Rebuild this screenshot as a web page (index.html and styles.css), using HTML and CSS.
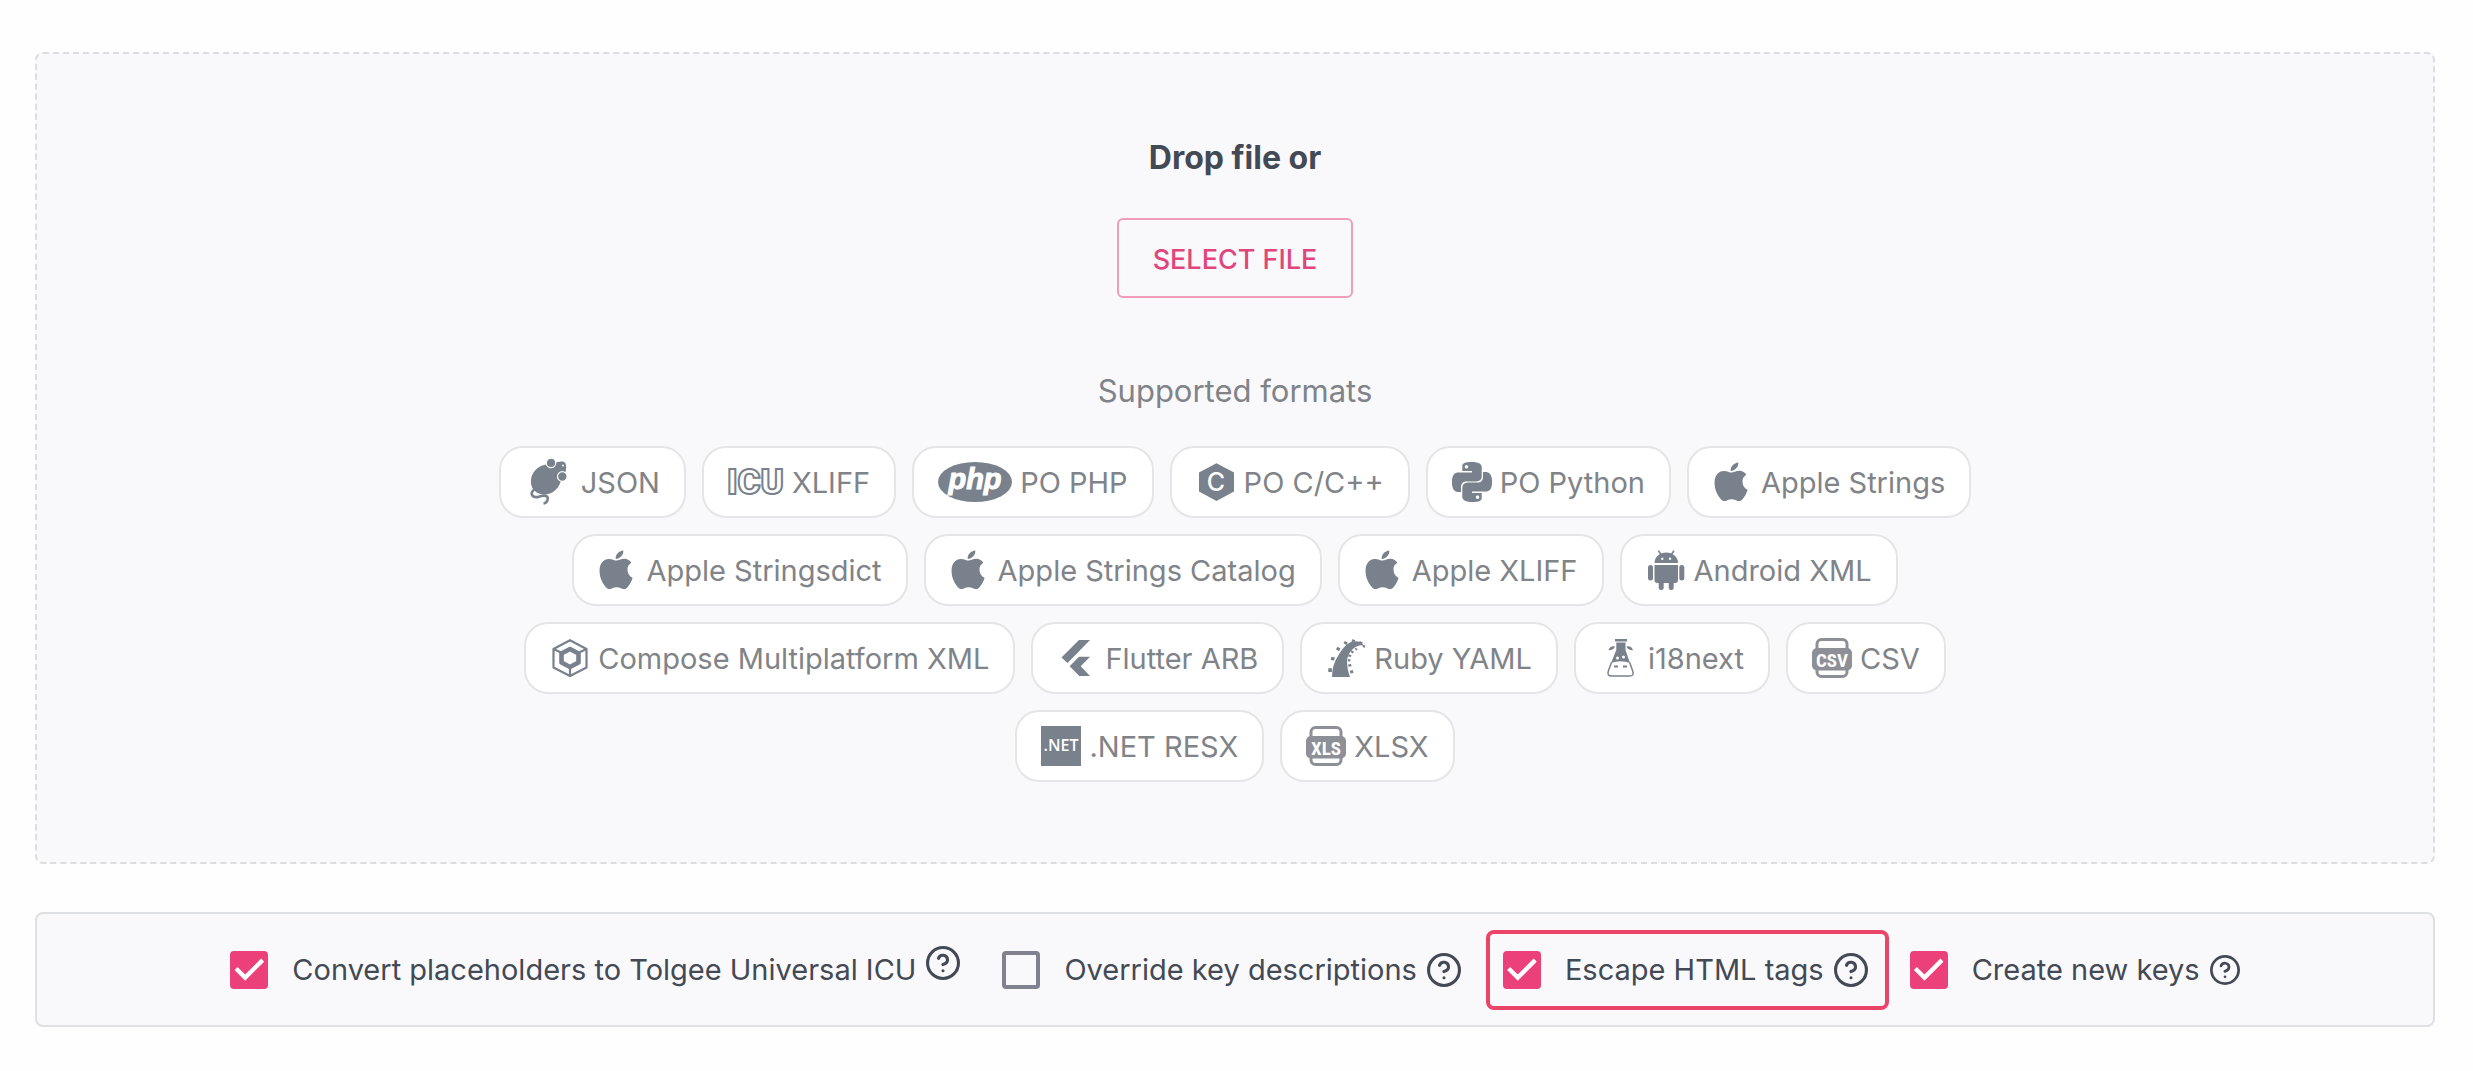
FILE: index.html
```html
<!DOCTYPE html>
<html lang="en">
<head>
<meta charset="utf-8">
<title>Import</title>
<link rel="stylesheet" href="styles.css">
</head>
<body>
<svg class="sprite" aria-hidden="true">
  <symbol id="apple" viewBox="0 0 40 40"><path d="M18.500 10.600C20.500 10.600 23 8.600 26.500 8.700C29.500 8.900 31.800 10.200 33.300 12.700C30.500 14.500 29.300 16.700 29.500 19.800C29.600 23.600 31.500 26.500 34.600 28C33.500 31.500 31.800 34.800 29.300 37.400C27.500 39.200 25.600 39.300 23.500 38.400C20 36.900 17.300 36.900 13.800 38.400C11.500 39.400 9.800 39 8.200 37.400C3.500 32.600 1.200 26 1.600 19.500C2 13 5.500 9 10.800 8.900C14 8.800 16.500 10.600 18.500 10.600ZM17.700 8.900C17.400 4.600 20.700 1 25.300.500C25.800 4.800 22 8.900 17.700 8.900Z"/></symbol>
  <symbol id="help" viewBox="1 1 22 22"><g fill="none" stroke="currentColor" stroke-width="2" stroke-linecap="round"><circle cx="12" cy="12" r="10"/><path d="M9.09 9a3 3 0 0 1 5.83 1c0 2-3 3-3 3M12 17h.01"/></g></symbol>
</svg>
<main class="page">
  <section class="dropzone">
    <h1 class="dropzone-title">Drop file or</h1>
    <button class="select-button" type="button">SELECT FILE</button>
    <h2 class="formats-title">Supported formats</h2>
    <ul class="formats">
      <li class="chip"><svg class="icon icon-mouse" viewBox="0 0 48 48"><ellipse cx="21" cy="21.500" rx="16" ry="14.200" transform="rotate(-45 21 21.500)"/><path d="M27 9C29 5 32 3.500 35 3.700C37 3.200 39.500 3.500 40.500 5.500C41.500 8 41.200 11 40.500 14C38 14.500 36 16 34 18L29 16Z"/><g stroke="#fff" stroke-width="1.200"><circle cx="26" cy="4.900" r="4.700"/><circle cx="37.300" cy="18.500" r="4.800"/></g><circle cx="38" cy="7.500" r=".9" fill="#fff"/><path d="M10 31C4 35 7 40 13 39C19 37 24 37 22.500 42Q22 45 18.500 45.500" fill="none" stroke="currentColor" stroke-width="2.600"/></svg>JSON</li>
      <li class="chip"><svg class="icon icon-icu" viewBox="0 0 56 40"><text x="-1" y="32" class="glyph-icu">ICU</text></svg>XLIFF</li>
      <li class="chip"><svg class="icon icon-php" viewBox="0 0 74 40"><ellipse cx="37" cy="20" rx="37" ry="20"/><text x="37" y="27" class="glyph-php">php</text></svg>PO PHP</li>
      <li class="chip"><svg class="icon" viewBox="0 0 40 40"><path d="M20.500 1.300L38 10.500V29.500L20.500 39L3 29.500V10.500Z"/><text x="20" y="29" class="glyph-c">C</text></svg>PO C/C++</li>
      <li class="chip"><svg class="icon" viewBox="0 0 24 24"><path d="M14.25.18l.9.2.73.26.59.3.45.32.34.34.25.34.16.33.1.3.04.26.02.2-.01.13V8.5l-.05.63-.13.55-.21.46-.26.38-.3.31-.33.25-.35.19-.35.14-.33.1-.3.07-.26.04-.21.02H8.77l-.69.05-.59.14-.5.22-.41.27-.33.32-.27.35-.2.36-.15.37-.1.35-.07.32-.04.27-.02.21v3.06H3.17l-.21-.03-.28-.07-.32-.12-.35-.18-.36-.26-.36-.36-.35-.46-.32-.59-.28-.73-.21-.88-.14-1.05-.05-1.23.06-1.22.16-1.04.24-.87.32-.71.36-.57.4-.44.42-.33.42-.24.4-.16.36-.1.32-.05.24-.01h.16l.06.01h8.16v-.83H6.18l-.01-2.75-.02-.37.05-.34.11-.31.17-.28.25-.26.31-.23.38-.2.44-.18.51-.15.58-.12.64-.1.71-.06.77-.04.84-.02 1.27.05zm-6.3 1.98l-.23.33-.08.41.08.41.23.34.33.22.41.09.41-.09.33-.22.23-.34.08-.41-.08-.41-.23-.33-.33-.22-.41-.09-.41.09zm13.09 3.95l.28.06.32.12.35.18.36.27.36.35.35.47.32.59.28.73.21.88.14 1.04.05 1.23-.06 1.23-.16 1.04-.24.86-.32.71-.36.57-.4.45-.42.33-.42.24-.4.16-.36.09-.32.05-.24.02-.16-.01h-8.22v.82h5.84l.01 2.76.02.36-.05.34-.11.31-.17.29-.25.25-.31.24-.38.2-.44.17-.51.15-.58.13-.64.09-.71.07-.77.04-.84.01-1.27-.04-1.07-.14-.9-.2-.73-.25-.59-.3-.45-.33-.34-.34-.25-.34-.16-.33-.1-.3-.04-.25-.02-.2.01-.13v-5.34l.05-.64.13-.54.21-.46.26-.38.3-.32.33-.24.35-.2.35-.14.33-.1.3-.06.26-.04.21-.02.13-.01h5.84l.69-.05.59-.14.5-.21.41-.28.33-.32.27-.35.2-.36.15-.36.1-.35.07-.32.04-.28.02-.21V6.07h2.09l.14.01zm-6.47 14.25l-.23.33-.08.41.08.41.23.33.33.23.41.08.41-.08.33-.23.23-.33.08-.41-.08-.41-.23-.33-.33-.23-.41-.08-.41.08z"/></svg>PO Python</li>
      <li class="chip"><svg class="icon"><use href="#apple"/></svg>Apple Strings</li>
      <li class="chip"><svg class="icon"><use href="#apple"/></svg>Apple Stringsdict</li>
      <li class="chip"><svg class="icon"><use href="#apple"/></svg>Apple Strings Catalog</li>
      <li class="chip"><svg class="icon"><use href="#apple"/></svg>Apple XLIFF</li>
      <li class="chip"><svg class="icon" viewBox="0 0 40 40"><path d="M8.500 13A11.700 10.500 0 0 1 32 13ZM8.500 15H32V30Q32 33 29 33H11.500Q8.500 33 8.500 30Z"/><path d="M12.800 1.200L16 6M27.600 1.200L24.500 6" stroke="currentColor" stroke-width="1.600" stroke-linecap="round"/><rect x="2" y="15" width="5" height="15.500" rx="2.500"/><rect x="33.300" y="15" width="5" height="15.500" rx="2.500"/><rect x="12.700" y="28" width="5" height="12" rx="2.300"/><rect x="22.700" y="28" width="5" height="12" rx="2.300"/><circle cx="16.300" cy="8.700" r="1.200" fill="#fff"/><circle cx="24" cy="8.700" r="1.200" fill="#fff"/></svg>Android XML</li>
      <li class="chip"><svg class="icon" viewBox="0 0 40 40"><g fill="none" stroke="currentColor" stroke-linejoin="round"><path stroke-width="2.200" d="M20 2.200L36.500 11V29.500L20 38L3.500 29.500V11ZM3.500 11L12 15M36.500 11L28 15M20 28V38"/><path stroke-width="4.600" d="M20 11L28.500 15.500V24.500L20 29L11.500 24.500V15.500Z"/></g></svg>Compose Multiplatform XML</li>
      <li class="chip"><svg class="icon" viewBox="0 0 40 40"><path d="M22 2H33L10.500 25L4.500 19.500ZM22 18.700H33L23.700 28.300L33 38H22.300L12.700 28.200Z"/></svg>Flutter ARB</li>
      <li class="chip"><svg class="icon" viewBox="0 0 40 40"><path d="M6 39C6 31 8 24 12 18C16 11 20 6 25 4C31 2 36 4 38 8C34 6 31 8 28 10C24 13 22 17 21 22C21 28 22 34 24 39Z"/><path d="M2.300 30.300h3.600v3.600h-3.600zM5.500 18.700l3.400.8-.8 3-3.400-.6zM11.500 8.800l3 1.800-1.600 2.600-3-2zM18.800 3l2.900 1.600-1.200 2.300-3-1.600zM26 1.300l3.200.6-.6 2-3-.2zM33.800 3l3 1.400-.9 1.800-2.700-1.500zM37.300 6.800l2.200 1-.9 2.200-2-1.200zM29.500 9.700l2.200 1.300-1.100 1.500-1.900-1.500zM25.500 12.300l2.500 1.500-1.300 1.600-2.300-1.600zM22.800 16.300l2.700 1-.8 1.900-2.600-1zM22 21l2.600.6-.4 2-2.600-.4zM22 26.500l3-.6.600 2.300-3 .5zM23.800 32.800l3-.7.700 2.900-3 .5z"/></svg>Ruby YAML</li>
      <li class="chip"><svg class="icon" viewBox="0 0 40 40"><path d="M15 1H27V3.400H15ZM16.300 4.500H25.500V12L30 25Q20.500 21.500 11 25L16.300 12Z"/><path d="M8.500 12.300Q10 7.500 15 8.500Q13.500 12.500 8.500 12.300ZM33 12.300Q31.500 7.500 26.500 8.500Q28 12.500 33 12.300Z"/><path d="M11.500 24.500L8.500 32.500C7 36.500 8.500 38 12 38H29.500C33 38 34 36.500 32.500 32.500L29.700 24.500" fill="none" stroke="currentColor" stroke-width="1.500"/><circle cx="17.500" cy="20" r="1.500" fill="#fff"/><circle cx="23.500" cy="19" r="1.500" fill="#fff"/><path d="M14 28.500h4M23 28.500h4" stroke="currentColor" stroke-width="1.800"/></svg>i18next</li>
      <li class="chip"><svg class="icon icon-sheet" viewBox="0 0 40 40"><rect x="5" y="1.500" width="30" height="37" rx="4.500" fill="none" stroke="currentColor" stroke-width="3"/><rect y="10" width="40" height="22.500" rx="5"/><text x="20" y="28.500" class="glyph-sheet">CSV</text></svg>CSV</li>
      <li class="chip"><svg class="icon" viewBox="0 0 40 40"><rect width="40" height="40"/><text x="20" y="25" class="glyph-net">.NET</text></svg>.NET RESX</li>
      <li class="chip"><svg class="icon icon-sheet" viewBox="0 0 40 40"><rect x="5" y="1.500" width="30" height="37" rx="4.500" fill="none" stroke="currentColor" stroke-width="3"/><rect y="10" width="40" height="22.500" rx="5"/><text x="20" y="28.500" class="glyph-sheet">XLS</text></svg>XLSX</li>
    </ul>
  </section>
  <section class="options">
    <div class="option option-raised"><label class="option-label"><input class="checkbox" type="checkbox" checked>Convert placeholders to Tolgee Universal ICU</label><svg class="help"><use href="#help"/></svg></div>
    <div class="option"><label class="option-label"><input class="checkbox" type="checkbox">Override key descriptions</label><svg class="help"><use href="#help"/></svg></div>
    <div class="option option-highlight"><label class="option-label"><input class="checkbox" type="checkbox" checked>Escape HTML tags</label><svg class="help"><use href="#help"/></svg></div>
    <div class="option"><label class="option-label"><input class="checkbox" type="checkbox" checked>Create new keys</label><svg class="help help-small"><use href="#help"/></svg></div>
  </section>
</main>
</body>
</html>
```
FILE: styles.css
```css
* {
  box-sizing: border-box;
}

body {
  margin: 0;
  background: #fefefe;
  color: #434955;
  font-family: Inter, "Liberation Sans", sans-serif;
}

.sprite {
  display: none;
}

.page {
  display: flex;
  flex-direction: column;
  gap: 48px;
  padding: 52px 38px 44px 35px;
}

.dropzone {
  display: flex;
  flex-direction: column;
  align-items: center;
  padding: 80px;
  border: 2px dashed #dcdde0;
  border-radius: 8px;
  background: #f9f9fb;
}

.dropzone-title {
  margin: 0 0 36px;
  font-size: 32px;
  font-weight: 700;
  line-height: 48px;
}

.select-button {
  height: 80px;
  padding: 2px 34px 0;
  border: 2px solid #f09dba;
  border-radius: 6px;
  background: transparent;
  color: #e0457b;
  font: 500 27px Inter, "Liberation Sans", sans-serif;
}

.formats-title {
  margin: 69px 0 31px;
  color: #808388;
  font-size: 31px;
  font-weight: 400;
  line-height: 48px;
}

.formats {
  display: flex;
  flex-wrap: wrap;
  justify-content: center;
  gap: 16px;
  max-width: 1600px;
  margin: 0;
  padding: 0;
  list-style: none;
}

.chip {
  display: flex;
  align-items: center;
  gap: 8px;
  height: 72px;
  padding: 0 24px;
  border: 2px solid #e5e5e7;
  border-radius: 24px;
  background: #fff;
  color: #808388;
  font-size: 29px;
  white-space: nowrap;
}

.icon {
  width: 40px;
  height: 40px;
  color: #78818c;
  fill: currentColor;
}

.icon-mouse {
  width: 48px;
  height: 48px;
}

.icon-icu {
  width: 56px;
}

.icon-php {
  width: 74px;
}

.icon-sheet {
  color: #8d9097;
}

.glyph-icu {
  fill: none;
  stroke: currentColor;
  stroke-width: 2px;
  font: 900 35px Roboto, sans-serif;
}

.glyph-php,
.glyph-c,
.glyph-net,
.glyph-sheet {
  fill: #fff;
  text-anchor: middle;
}

.glyph-php {
  stroke: #fff;
  stroke-width: 1px;
  font: italic 700 29px "Liberation Sans", sans-serif;
}

.glyph-c {
  font: 500 25px Inter, sans-serif;
}

.glyph-net {
  font: 600 16px "Open Sans", sans-serif;
}

.glyph-sheet {
  font: 700 19px "Roboto Condensed", "Liberation Sans Narrow", Roboto, sans-serif;
}

.options {
  display: flex;
  flex-wrap: wrap;
  align-items: center;
  justify-content: center;
  gap: 16px 42px;
  padding: 32px 24px 31px;
  border: 2px solid #dfe0e3;
  border-radius: 8px;
  background: #f9f9fb;
}

.option {
  position: relative;
  display: flex;
  align-items: center;
  gap: 10px;
}

.option-label {
  display: flex;
  align-items: center;
  gap: 24px;
  font-size: 29px;
  line-height: 48px;
}

.option-raised .help {
  align-self: flex-start;
}

.option-highlight::after {
  content: "";
  position: absolute;
  inset: -16px -21px -16px -17px;
  border: 4px solid #ea4468;
  border-radius: 8px;
  pointer-events: none;
}

.checkbox {
  appearance: none;
  width: 38px;
  height: 38px;
  margin: 0;
  border: 4px solid #80838f;
  border-radius: 4px;
}

.checkbox:checked {
  border: 0;
  background: #ec407a;
}

.checkbox:checked::before {
  content: "";
  display: block;
  width: 100%;
  height: 100%;
  background: #fff;
  clip-path: polygon(39% 78%, 11% 50%, 19% 42%, 39% 62%, 81% 20%, 89% 28%);
}

.help {
  width: 34px;
  height: 34px;
}

.help-small {
  width: 30px;
  height: 30px;
}
```
